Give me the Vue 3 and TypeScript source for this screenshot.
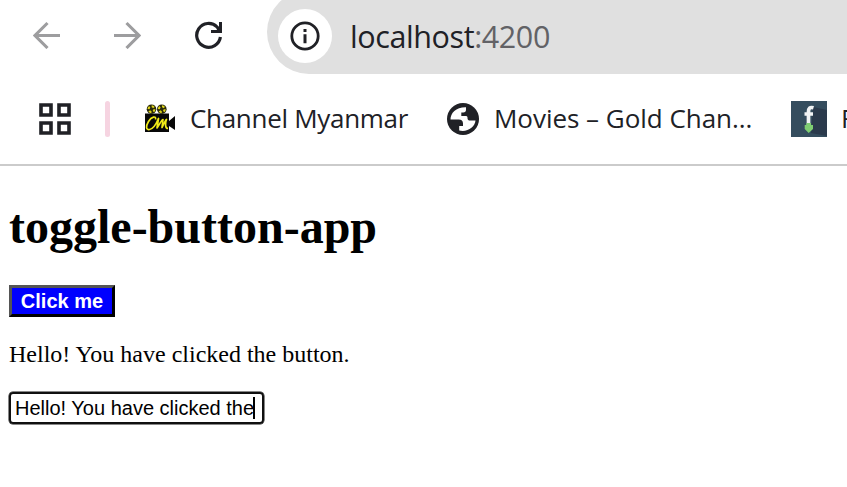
<script setup lang="ts">
import { ref } from 'vue'

const message = 'Hello! You have clicked the button.'
const clicked = ref(true)
const toggle = () => {
  clicked.value = !clicked.value
}
</script>

<template>
  <div class="window">
    <nav class="toolbar">
      <svg class="nav-icon" viewBox="0 0 28 28"><path d="M27 14.5H3M14.5 2L2 14.5 14.5 27" fill="none" stroke="#9d9d9f" stroke-width="3.1" /></svg>
      <svg class="nav-icon forward" viewBox="0 0 28 28"><path d="M1 14.5h24M13.5 2L26 14.5 13.5 27" fill="none" stroke="#9d9d9f" stroke-width="3.1" /></svg>
      <svg class="nav-icon reload" viewBox="0 0 28 28">
        <path d="M25.4 16A11.9 11.9 0 1 1 22.1 6L25 9.5" fill="none" stroke="#202126" stroke-width="3.2" />
        <path d="M24 1h3v11H16V9h5.5l2.5-3z" fill="#202126" />
      </svg>
      <div class="address">
        <span class="site-info">
          <svg width="30" height="30" viewBox="0 0 30 30"><circle cx="15" cy="15" r="13.2" fill="none" stroke="#202126" stroke-width="2.8" /><path d="M13.5 13.2h3v9h-3zM13.5 8h3v3h-3z" fill="#202126" /></svg>
        </span>
        <span class="host">localhost</span><span class="port">:4200</span>
      </div>
    </nav>
    <div class="bookmarks">
      <svg class="apps" width="34" height="34" viewBox="0 0 34 34" fill="none" stroke="#202126" stroke-width="3.6"><path d="M3 3h10v10H3zM21 3h10v10H21zM3 21h10v10H3zM21 21h10v10H21z" /></svg>
      <span class="divider"></span>
      <svg class="camera" width="32" height="30" viewBox="0 0 32 30">
        <path d="M1 9.500h24V28H1zM25 17l6-5v14l-6-4z" fill="#080808" />
        <circle cx="7.5" cy="5.2" r="4.8" fill="#29290b" /><circle cx="17.8" cy="5.2" r="4.800" fill="#29290b" />
        <g fill="none" stroke="#dfd51c" stroke-width="2.1" stroke-dasharray="2.5 2"><circle cx="7.5" cy="5.2" r="2.900" /><circle cx="17.800" cy="5.2" r="2.900" /></g>
        <path d="M11.500 15.500c1-4-4-3-7 2s-2.500 8.500 1 8 6.500-5 9-11l-1.500 9.500c2.500-3 4.500-8.500 6-8.500l-1 8c1.500-2.500 3-7 4.500-8-1.500 3.500-1.500 9 1.500 9" fill="none" stroke="#f1eb18" stroke-width="1.700" stroke-linejoin="round" />
      </svg>
      <span class="label channel">Channel Myanmar</span>
      <svg class="globe" width="32" height="32" viewBox="0 0 32 32">
        <circle cx="16" cy="16" r="16" fill="#202126" />
        <path d="M3.500 16.500C3.500 10 9 4 19 4.200v2.600c0 1.700-1 2.700-2.700 2.700h-2V13H19c1.500 0 1.500 1 1.500 2.200 0 1.800 1 2.300 2.700 2.300H28.500C28 24 20.500 29.500 12.200 27.500V23H16v-2.500c0-2.600-1.500-4-4.200-4z" fill="#fff" />
      </svg>
      <span class="label movies">Movies – Gold Chan...</span>
      <svg class="favicon" width="36" height="36" viewBox="0 0 36 36">
        <path d="M0 0h36v36H0z" fill="#354d5e" />
        <path d="M22 6l14 3v26L20 32z" fill="#2b3a4c" />
        <path d="M22.500 6.800c-3.700-1-5 .4-5 4.200V24M13.500 13h8.500" fill="none" stroke="#f2f4f5" stroke-width="3.700" />
        <path d="M15.500 22h4.500v2h2v4l-4.300 4-4-4v-4h1.800z" fill="#7fce72" />
      </svg>
      <span class="label last">F</span>
    </div>
    <main class="page">
      <h1>toggle-button-app</h1>
      <button type="button" @click="toggle">Click me</button>
      <p>{{ clicked ? message : '' }}</p>
      <div class="field"><span>Hello! You have clicked the</span><i class="caret"></i></div>
    </main>
  </div>
</template>

<style>
body { background: #fff; overflow: hidden; }
</style>
<style scoped>
.window { width: 847px; height: 487px; overflow: hidden; background: #fff; }
svg { display: block; flex: none; }
.toolbar { display: flex; height: 74px; }
.nav-icon { width: 28px; height: 28px; margin: 21px 0 0 33px; }
.forward { margin-left: 52px; }
.reload { margin-left: 54px; }
.address { flex: 1; display: flex; align-items: center; height: 84px; margin: -10px 0 0 44px; padding: 0 0 0 11px; box-sizing: border-box; border-radius: 42px 0 0 42px; background: #e0e0e0; font: 30.5px/40px "Open Sans", sans-serif; white-space: nowrap; }
.site-info { display: flex; align-items: center; justify-content: center; width: 54px; height: 54px; margin: 8px 18px 0 0; border-radius: 50%; background: #fff; }
.host, .port { padding-top: 8px; letter-spacing: -.4px; color: #202126; }
.port { color: #626266; }
.bookmarks { display: flex; align-items: center; height: 90px; border-bottom: 2px solid #cbcbcb; white-space: nowrap; overflow: hidden; }
.apps { margin-left: 38px; }
.divider { flex: none; width: 5px; height: 36px; margin-left: 33px; border-radius: 3px; background: #f6d4e1; }
.camera { margin-left: 34px; }
.label { flex: none; padding-bottom: 2px; font: 26px/36px "Open Sans", sans-serif; color: #202126; }
.channel { width: 221px; margin-left: 14px; letter-spacing: -.3px; }
.globe { margin-left: 36px; }
.movies { width: 262px; margin-left: 15px; letter-spacing: -.03px; }
.favicon { margin-left: 35px; }
.last { margin-left: 14px; }
.page { padding: 33px 9px 0; color: #000; font: 24px/28px "Liberation Serif", serif; }
h1 { margin: 0; font-size: 48px; line-height: 56px; }
button { display: block; width: 106px; height: 32px; margin: 30px 0 0; padding: 0; border: 3px outset #000; border-color: #555 #000 #000 #555; border-radius: 0; background: #00f; color: #fff; font: bold 20px/24px "Liberation Sans", sans-serif; }
p { margin: 24px 0; height: 27px; line-height: 27px; }
.field { display: flex; align-items: center; width: 255px; height: 32px; padding-left: 3px; box-sizing: border-box; border: 2px solid #101010; box-shadow: 0 0 0 .5px #101010; border-radius: 4px; font: 20px/24px "Liberation Sans", sans-serif; white-space: nowrap; }
.field span { margin-bottom: 1px; padding-left: 1px; }
.caret { width: 2px; height: 22px; margin-left: -1px; background: #000; }
</style>
